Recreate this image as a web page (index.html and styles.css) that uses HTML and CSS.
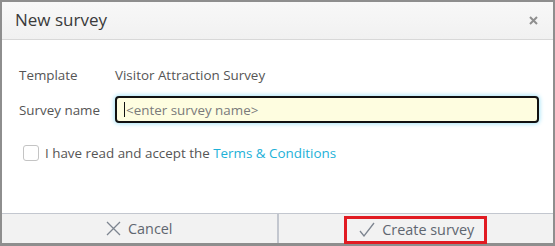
FILE: index.html
```html
<!DOCTYPE html>
<html>
<head>
	<title>New survey</title>
	<link rel="stylesheet" href="styles.css">
</head>
<body>
	<section class="modal">
		<div class="modal-head">
			<h1 class="modal-title">New survey</h1>
			<svg class="close-btn" width="9" height="9" viewBox="0 0 9 9"><path d="M1 1 L8 8 M8 1 L1 8" stroke="#8f8f8f" stroke-width="2" fill="none"/></svg>
		</div>
		<div class="modal-body">
			<div class="form-row">
				<span class="lbl">Template</span>
				<span class="val">Visitor Attraction Survey</span>
			</div>
			<div class="form-row">
				<span class="lbl">Survey name</span>
				<div class="input-bx">
					<span class="caret"></span>
					<span class="placeholder">&lt;enter survey name&gt;</span>
				</div>
			</div>
			<label class="terms">
				<span class="chk"></span>
				<span>I have read and accept the <a href="#">Terms &amp; Conditions</a></span>
			</label>
		</div>
		<div class="modal-foot">
			<div class="foot-btn">
				<svg width="15" height="15" viewBox="0 0 15 15"><path d="M1 1 L14 14 M14 1 L1 14" stroke="#7d8590" stroke-width="1.3" fill="none"/></svg>
				<span>Cancel</span>
			</div>
			<div class="foot-btn">
				<span class="highlight">
					<svg width="16" height="15" viewBox="0 0 16 15"><path d="M1 9 L5 14 L15 1" stroke="#7d8590" stroke-width="1.3" fill="none"/></svg>
					<span>Create survey</span>
				</span>
			</div>
		</div>
	</section>
</body>
</html>
```

FILE: styles.css
```css
*{
	margin: 0;
	padding: 0;
	box-sizing: border-box;
	font-family: "Open Sans", Arial, sans-serif;
}
body{
	width: 555px;
	height: 246px;
	background: #fff;
}
.modal{
	width: 555px;
	height: 246px;
	border: solid 2px #8e8e8e;
	border-bottom-width: 3px;
	display: flex;
	flex-direction: column;
	color: #555;
}
.modal-head{
	height: 38px;
	background: linear-gradient(#f8f8f8, #f1f1f1);
	border-bottom: solid 1px #d8d8d8;
	display: flex;
	align-items: center;
	justify-content: space-between;
	padding: 0 15px 0 13px;
}
.modal-title{
	font-size: 17px;
	font-weight: normal;
	color: #3a3a3a;
	padding-bottom: 2px;
}
.modal-body{
	flex: 1;
	padding: 26px 14px 0 17px;
}
.form-row{
	display: flex;
	align-items: center;
	font-size: 13.4px;
	margin-bottom: 10px;
}
.form-row:first-child{
	margin-bottom: 12px;
}
.lbl{
	width: 96px;
	color: #555;
}
.val{
	color: #555;
}
.input-bx{
	flex: 1;
	height: 27px;
	background: #fefde0;
	border: solid 2px #111;
	border-radius: 4px;
	box-shadow: 0 0 4px 1px #a8e4f8;
	display: flex;
	align-items: center;
	padding-left: 7px;
}
.caret{
	width: 1px;
	height: 15px;
	background: #111;
	margin-right: 1px;
}
.placeholder{
	color: #7a7a7a;
	font-size: 13.4px;
}
.terms{
	display: flex;
	align-items: center;
	font-size: 13.4px;
	margin-top: 21px;
	padding-left: 4px;
	color: #555;
}
.chk{
	width: 16px;
	height: 16px;
	border: solid 1px #c4c4c4;
	border-radius: 3px;
	margin-right: 6px;
}
.terms a{
	color: #1db1d8;
	text-decoration: none;
}
.modal-foot{
	height: 30px;
	background: #f2f2f2;
	border-top: solid 1px #c3c7cf;
	display: flex;
}
.foot-btn{
	flex: 1;
	display: flex;
	align-items: center;
	justify-content: center;
	font-size: 14.4px;
	color: #5f6670;
}
.foot-btn:first-child{
	border-right: solid 2px #c3c7cf;
}
.foot-btn svg{
	margin-right: 7px;
}
.highlight{
	display: flex;
	align-items: center;
	border: solid 3px #e11b22;
	height: 28px;
	padding: 0 10px 0 12px;
	margin-top: 2px;
}
```
